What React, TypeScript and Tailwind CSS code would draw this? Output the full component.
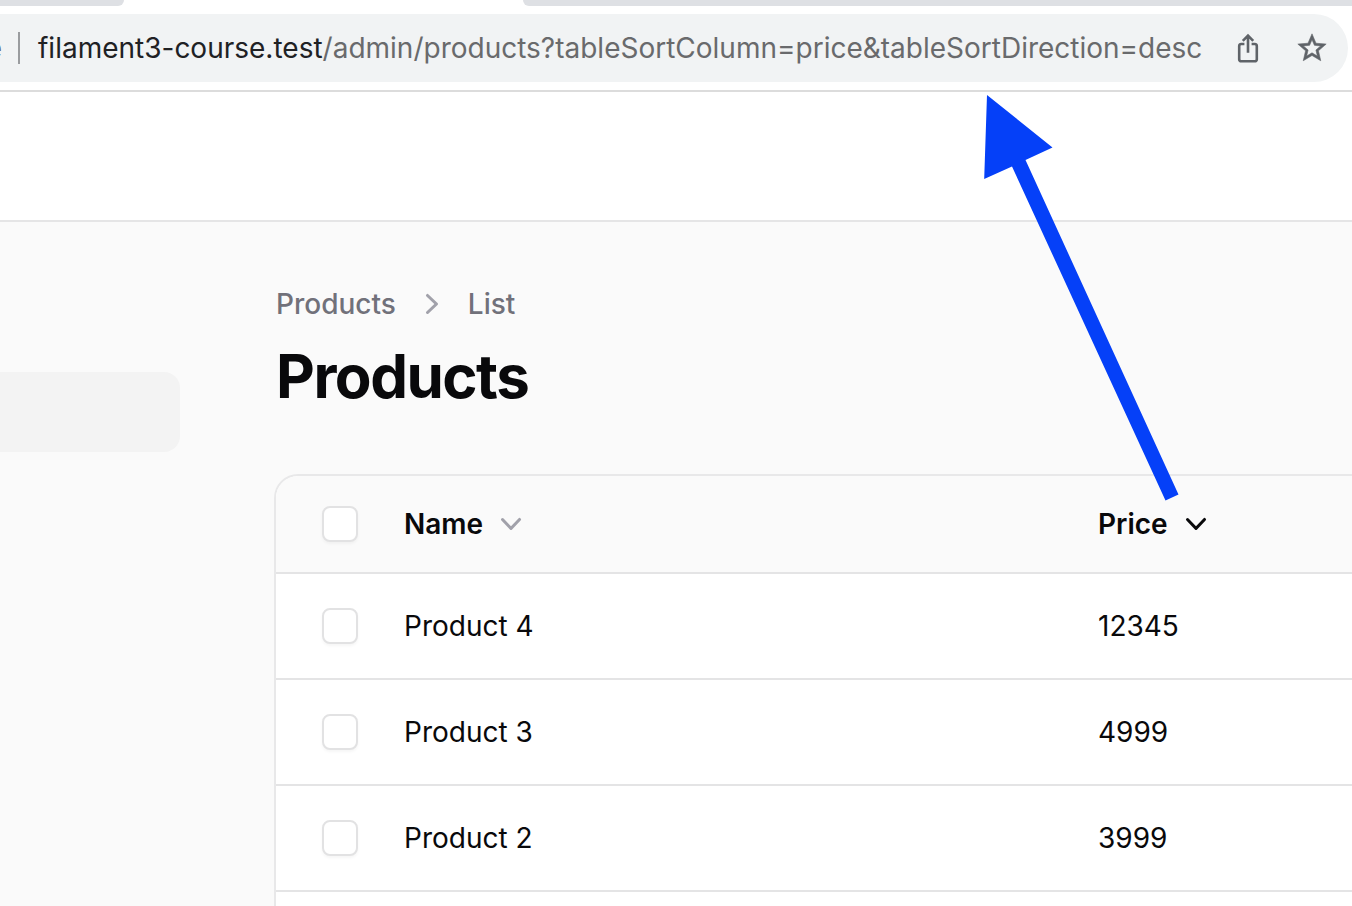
import React from "react";

type Product = { name: string; price: number };

const products: Product[] = [
  { name: "Product 4", price: 12345 },
  { name: "Product 3", price: 4999 },
  { name: "Product 2", price: 3999 },
];

function ChevronDown({ className }: { className: string }) {
  return (
    <svg className={`size-10 shrink-0 ${className}`} viewBox="0 0 20 20" fill="currentColor" aria-hidden="true">
      <path
        fillRule="evenodd"
        clipRule="evenodd"
        d="M5.23 7.21a.75.75 0 011.06.02L10 11.168l3.71-3.938a.75.75 0 111.08 1.04l-4.25 4.5a.75.75 0 01-1.08 0l-4.25-4.5a.75.75 0 01.02-1.06z"
      />
    </svg>
  );
}

function ChevronRight() {
  return (
    <svg className="size-10 shrink-0 text-[#a1a1aa]" viewBox="0 0 20 20" fill="currentColor" aria-hidden="true">
      <path
        fillRule="evenodd"
        clipRule="evenodd"
        d="M7.21 14.77a.75.75 0 01.02-1.06L11.168 10 7.23 6.29a.75.75 0 111.04-1.08l4.5 4.25a.75.75 0 010 1.08l-4.5 4.25a.75.75 0 01-1.06-.02z"
      />
    </svg>
  );
}

function ShareIcon() {
  return (
    <svg className="h-8 w-6" viewBox="0 0 24 32" fill="none" stroke="currentColor" strokeWidth="2.6" aria-hidden="true">
      <path d="M8.4 12H5.2A1.9 1.9 0 0 0 3.2 13.9V27.4A1.9 1.9 0 0 0 5.2 29.3H18.8A1.9 1.9 0 0 0 20.8 27.4V13.9A1.9 1.9 0 0 0 18.8 12H15.6" />
      <path d="M12 20.8V4M6.8 8.8L12 3.6L17.2 8.8" />
    </svg>
  );
}

function StarIcon() {
  return (
    <svg
      className="size-[34px]"
      viewBox="0 0 24 24"
      fill="currentColor"
      stroke="currentColor"
      strokeWidth="0.4"
      aria-hidden="true"
    >
      <path d="M22 9.24l-7.19-.62L12 2 9.19 8.63 2 9.24l5.46 4.73L5.82 21 12 17.27 18.18 21l-1.63-7.03L22 9.24zM12 15.4l-3.76 2.27 1-4.28-3.32-2.88 4.38-.38L12 6.1l1.71 4.04 4.38.38-3.32 2.88 1 4.28L12 15.4z" />
    </svg>
  );
}

function Checkbox({ label }: { label: string }) {
  return (
    <input
      type="checkbox"
      aria-label={label}
      className="block size-9 appearance-none rounded-lg border-2 border-[#e2e2e3] bg-white shadow-[0_2px_3px_rgba(0,0,0,0.04)] checked:bg-blue-600"
    />
  );
}

function SortButton({ label, active }: { label: string; active?: boolean }) {
  return (
    <button type="button" className="flex items-center gap-2 font-semibold">
      {label}
      <ChevronDown className={active ? "text-[#09090b]" : "text-[#a1a1aa]"} />
    </button>
  );
}

export default function App() {
  return (
    <div className="relative flex h-screen flex-col overflow-hidden bg-[#fafafa] font-['Inter','Liberation_Sans',sans-serif] text-[28px] leading-10 text-[#09090b]">
      <header className="border-b-2 border-[#dcdcdc] bg-white">
        <div className="flex h-1.5">
          <div className="w-[9.2%] rounded-br-[16px] bg-[#dee0e4]" />
          <div className="w-[29.5%]" />
          <div className="flex-1 rounded-bl-[16px] bg-[#dee0e4]" />
        </div>
        <div className="flex py-2 pr-1">
          <div className="flex h-[68px] min-w-0 flex-1 items-center rounded-r-full bg-[#f1f3f4] text-[#5f6368]">
            <span className="flex w-0.5 justify-end">e</span>
            <span className="ml-4 h-8 w-0.5 shrink-0 bg-[#9a9c9f]" />
            <div role="textbox" aria-label="Address" className="ml-[18px] min-w-0 flex-1 whitespace-nowrap text-[#696a6c]">
              <span className="text-[#202124]">filament3-course.test</span>
              /admin/products?tableSortColumn=price&amp;tableSortDirection=desc
            </div>
            <div className="flex shrink-0 items-center gap-[35px] pr-[19px]">
              <button type="button" aria-label="Share">
                <ShareIcon />
              </button>
              <button type="button" aria-label="Bookmark this page">
                <StarIcon />
              </button>
            </div>
          </div>
        </div>
      </header>

      <div className="h-[130px] shrink-0 border-b-2 border-[#e5e5e6] bg-white" />

      <div className="flex min-h-0 flex-1 gap-[94px]">
        <aside className="w-[180px] shrink-0 pt-[150px]">
          <div className="h-20 rounded-r-2xl bg-[#f3f3f3]" />
        </aside>

        <main className="flex min-w-0 flex-1 flex-col pt-[62px]">
          <div className="pl-0.5">
            <nav aria-label="Breadcrumb" className="flex items-center gap-4 font-medium text-[#71717a]">
              <a href="#products">Products</a>
              <ChevronRight />
              <a href="#list">List</a>
            </nav>
            <h1 className="mt-4 text-[60px] leading-[72px] font-bold tracking-tight">Products</h1>
          </div>

          <div className="mt-[62px] flex-1 overflow-hidden rounded-tl-[24px] border-t-2 border-l-2 border-[#e8e8e9] bg-white">
            <table className="w-full table-fixed border-collapse text-left">
              <thead className="bg-[#fafafa]">
                <tr className="h-[97px] border-b-2 border-[#e4e4e5]">
                  <th className="w-32 pl-[46px]">
                    <Checkbox label="Select all products" />
                  </th>
                  <th className="w-[64.5%]">
                    <SortButton label="Name" />
                  </th>
                  <th>
                    <SortButton label="Price" active />
                  </th>
                </tr>
              </thead>
              <tbody>
                {products.map((product) => (
                  <tr key={product.name} className="h-[106px] border-b-2 border-[#e4e4e5]">
                    <td className="pl-[46px]">
                      <Checkbox label={`Select ${product.name}`} />
                    </td>
                    <td>{product.name}</td>
                    <td>{product.price}</td>
                  </tr>
                ))}
              </tbody>
            </table>
          </div>
        </main>
      </div>

      <svg
        className="pointer-events-none absolute top-[95px] left-[984px] h-[406px] w-[195px] text-[#0540f8]"
        viewBox="0 0 195 406"
        fill="currentColor"
        aria-hidden="true"
      >
        <path d="M3 0L68.5 52.5L41.5 65L194.5 399.5L181.5 405.5L28 71.5L0.2 84Z" />
      </svg>
    </div>
  );
}
